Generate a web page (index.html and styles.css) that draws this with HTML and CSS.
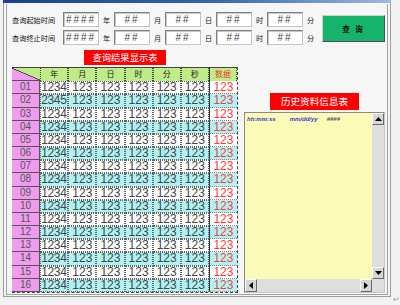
FILE: index.html
```html
<!DOCTYPE html>
<html lang="zh">
<head>
    <meta charset="UTF-8">
    <title>查询</title>
    <link rel="stylesheet" href="styles.css">
</head>
<body>
<div class="window">
    <div class="titlebar"></div>
    <div class="content">
        <div class="query">
            <div class="fields">
                <div class="row">
                    <span class="lbl">查询起始时间</span>
                    <span class="box">####</span><span class="unit">年</span>
                    <span class="box">##</span><span class="unit">月</span>
                    <span class="box">##</span><span class="unit">日</span>
                    <span class="box">##</span><span class="unit">时</span>
                    <span class="box">##</span><span class="unit">分</span>
                </div>
                <div class="row">
                    <span class="lbl">查询终止时间</span>
                    <span class="box">####</span><span class="unit">年</span>
                    <span class="box">##</span><span class="unit">月</span>
                    <span class="box">##</span><span class="unit">日</span>
                    <span class="box">##</span><span class="unit">时</span>
                    <span class="box">##</span><span class="unit">分</span>
                </div>
            </div>
            <button class="btn" type="button">查 询</button>
        </div>

        <div class="main">
            <div class="result">
                <div class="tag">查询结果显示表</div>
                <div class="grid">
                    <div class="tr head">
                        <div class="corner-cell"></div><div class="h">年</div><div class="h">月</div><div class="h">日</div><div class="h">时</div><div class="h">分</div><div class="h">秒</div><div class="h red">数据</div>
                    </div>
                    <div class="tr"><div class="rh">01</div><div class="c y">1234</div><div class="c">123</div><div class="c">123</div><div class="c">123</div><div class="c">123</div><div class="c">123</div><div class="c d">123</div></div>
                    <div class="tr alt"><div class="rh">02</div><div class="c y">2345</div><div class="c">123</div><div class="c">123</div><div class="c">123</div><div class="c">123</div><div class="c">123</div><div class="c d">123</div></div>
                    <div class="tr"><div class="rh">03</div><div class="c y">1234</div><div class="c">123</div><div class="c">123</div><div class="c">123</div><div class="c">123</div><div class="c">123</div><div class="c d">123</div></div>
                    <div class="tr alt"><div class="rh">04</div><div class="c y">1234</div><div class="c">123</div><div class="c">123</div><div class="c">123</div><div class="c">123</div><div class="c">123</div><div class="c d">123</div></div>
                    <div class="tr"><div class="rh">05</div><div class="c y">1234</div><div class="c">123</div><div class="c">123</div><div class="c">123</div><div class="c">123</div><div class="c">123</div><div class="c d">123</div></div>
                    <div class="tr alt"><div class="rh">06</div><div class="c y">1234</div><div class="c">123</div><div class="c">123</div><div class="c">123</div><div class="c">123</div><div class="c">123</div><div class="c d">123</div></div>
                    <div class="tr"><div class="rh">07</div><div class="c y">1234</div><div class="c">123</div><div class="c">123</div><div class="c">123</div><div class="c">123</div><div class="c">123</div><div class="c d">123</div></div>
                    <div class="tr alt"><div class="rh">08</div><div class="c y">1234</div><div class="c">123</div><div class="c">123</div><div class="c">123</div><div class="c">123</div><div class="c">123</div><div class="c d">123</div></div>
                    <div class="tr"><div class="rh">09</div><div class="c y">1234</div><div class="c">123</div><div class="c">123</div><div class="c">123</div><div class="c">123</div><div class="c">123</div><div class="c d">123</div></div>
                    <div class="tr alt"><div class="rh">10</div><div class="c y">1234</div><div class="c">123</div><div class="c">123</div><div class="c">123</div><div class="c">123</div><div class="c">123</div><div class="c d">123</div></div>
                    <div class="tr"><div class="rh">11</div><div class="c y">1234</div><div class="c">123</div><div class="c">123</div><div class="c">123</div><div class="c">123</div><div class="c">123</div><div class="c d">123</div></div>
                    <div class="tr alt"><div class="rh">12</div><div class="c y">1234</div><div class="c">123</div><div class="c">123</div><div class="c">123</div><div class="c">123</div><div class="c">123</div><div class="c d">123</div></div>
                    <div class="tr"><div class="rh">13</div><div class="c y">1234</div><div class="c">123</div><div class="c">123</div><div class="c">123</div><div class="c">123</div><div class="c">123</div><div class="c d">123</div></div>
                    <div class="tr alt"><div class="rh">14</div><div class="c y">1234</div><div class="c">123</div><div class="c">123</div><div class="c">123</div><div class="c">123</div><div class="c">123</div><div class="c d">123</div></div>
                    <div class="tr"><div class="rh">15</div><div class="c y">1234</div><div class="c">123</div><div class="c">123</div><div class="c">123</div><div class="c">123</div><div class="c">123</div><div class="c d">123</div></div>
                    <div class="tr alt"><div class="rh">16</div><div class="c y">1234</div><div class="c">123</div><div class="c">123</div><div class="c">123</div><div class="c">123</div><div class="c">123</div><div class="c d">123</div></div>
                </div>
            </div>

            <div class="history">
                <div class="tag tag-wide">历史资料信息表</div>
                <div class="memo">
                    <div class="memo-text">
                        <span class="f1">hh:mm:ss</span><span class="f2">mm/dd/yy</span><span class="f3">####</span>
                    </div>
                    <div class="vbar">
                        <div class="sbtn"><svg width="7" height="4" viewBox="0 0 7 4"><polygon points="3.5,0 7,4 0,4" fill="#000"/></svg></div>
                        <div class="track"></div>
                        <div class="sbtn"><svg width="7" height="4" viewBox="0 0 7 4"><polygon points="0,0 7,0 3.5,4" fill="#000"/></svg></div>
                    </div>
                    <div class="hbar">
                        <div class="sbtn"><svg width="4" height="7" viewBox="0 0 4 7"><polygon points="4,0 4,7 0,3.5" fill="#000"/></svg></div>
                        <div class="track"></div>
                        <div class="sbtn"><svg width="4" height="7" viewBox="0 0 4 7"><polygon points="0,0 4,3.5 0,7" fill="#000"/></svg></div>
                    </div>
                    <div class="sq"></div>
                </div>
            </div>
        </div>
    </div>
</div>
<span class="para">↵</span>
</body>
</html>
```

FILE: styles.css
```css
body{
    margin: 0;
    height: 305px;
    display: flex;
    background: #f2f2f2;
    font-family: "Liberation Sans", "Noto Sans CJK SC", sans-serif;
}
.window{
    box-sizing: border-box;
    width: 389px;
    height: 297px;
    margin-left: 3px;
    border: 1px solid #9c9c9c;
    border-top: none;
    padding: 0 2px 1px 2px;
    background: #f6f6f6;
    display: flex;
    flex-direction: column;
}
.titlebar{
    height: 3px;
    margin: 0 -3px 1px -3px;
    background: linear-gradient(to right, #1b3f8c, #3566b0 55%, #9fb8e0);
}
.content{
    flex: 1;
    border: 1px solid #a0a0a0;
    border-top: none;
    padding: 8px 0 0 5px;
    background: #f6f6f6;
}

/* query fields */
.query{
    display: flex;
    align-items: center;
}
.fields{
    display: flex;
    flex-direction: column;
    gap: 3px;
}
.row{
    display: flex;
    align-items: center;
    height: 15px;
}
.lbl{
    width: 51px;
    font-family: "Noto Sans CJK SC", sans-serif;
    font-size: 7.2px;
    color: #111;
}
.box{
    box-sizing: border-box;
    width: 36px;
    height: 15px;
    background: #fff;
    border: 1px solid;
    border-color: #808080 #c4c4c4 #c4c4c4 #808080;
    box-shadow: inset 1px 1px 0 #c8c8c8;
    font-size: 10px;
    letter-spacing: 2px;
    line-height: 13px;
    text-align: center;
    color: #444;
}
.unit{
    width: 15px;
    text-align: center;
    font-family: "Noto Sans CJK SC", sans-serif;
    font-size: 7.2px;
    color: #222;
}
.btn{
    width: 63px;
    height: 27px;
    margin-left: 4px;
    padding: 0;
    background: #16b46b;
    border: 1px solid;
    border-color: #d0d0d0 #505050 #505050 #d0d0d0;
    font-family: "Noto Sans CJK SC", sans-serif;
    font-size: 7.5px;
    font-weight: bold;
    letter-spacing: 2px;
    color: #111;
}

/* main area */
.main{
    display: flex;
    align-items: flex-end;
    margin-top: 5px;
}
.result{
    width: 226px;
    display: flex;
    flex-direction: column;
}
.tag{
    align-self: center;
    width: 82px;
    height: 15px;
    line-height: 15px;
    background: #ff0000;
    color: #fff;
    text-align: center;
    font-family: "Noto Sans CJK SC", sans-serif;
    font-size: 9.3px;
}
.result .tag{
    margin-bottom: 2px;
}
.grid{
    height: 226px;
    display: flex;
    flex-direction: column;
    border-top: 1px solid #444;
    border-right: 1px dashed #444;
    border-bottom: 1px dashed #444;
    box-sizing: border-box;
}
.tr{
    flex: 1;
    display: grid;
    grid-template-columns: repeat(8, 1fr);
    min-height: 0;
}
.tr > div{
    box-sizing: border-box;
    white-space: nowrap;
    text-align: center;
}
.head .h{
    background: #c0ec88;
    border-left: 1px dotted #444;
    border-right: 1px dotted #444;
    font-family: "Noto Sans CJK SC", sans-serif;
    font-size: 8px;
    line-height: 12px;
    color: #222;
}
.head .red{
    color: #e83a3a;
    border-left: 1px solid #333;
}
.corner-cell{
    background: linear-gradient(to bottom left, #c0ec88 48%, #444 49%, #444 52%, #ef9cef 53%);
    border-bottom: 1px solid #555;
}
.rh{
    background: #ef9cef;
    border-bottom: 1px solid #555;
    border-right: 1px solid #555;
    font-size: 10px;
    line-height: 12px;
    color: #555;
}
.c{
    background: #fff;
    border: 1px dotted #666;
    font-size: 12px;
    line-height: 11px;
    color: #444;
}
.c.y{
    text-align: left;
    letter-spacing: -0.3px;
}
.c.d{
    color: #ff3c3c;
    border: none;
    border-left: 1px solid #333;
    border-bottom: 1px dotted #888;
    line-height: 12px;
}
.alt .c{
    background: #b0f2f2;
}

/* history panel */
.history{
    margin-left: 6px;
    display: flex;
    flex-direction: column;
}
.tag-wide{
    width: 89px;
    height: 17px;
    line-height: 17px;
    margin-bottom: 2px;
    font-size: 9.6px;
}
.memo{
    box-sizing: border-box;
    width: 141px;
    height: 181px;
    display: grid;
    grid-template-columns: 1fr 12px;
    grid-template-rows: 1fr 13px;
    border: 1px solid;
    border-color: #8a8a8a #c8c8c8 #c8c8c8 #8a8a8a;
}
.memo-text{
    background: #fbfab6;
    padding: 2px 2px;
    font-size: 6px;
    font-weight: bold;
    font-style: italic;
    color: #3a3acb;
    line-height: 9px;
}
.f2{
    margin-left: 14px;
}
.f3{
    margin-left: 9px;
    color: #555;
}
.vbar, .hbar{
    display: flex;
    background: #dedede;
}
.vbar{
    flex-direction: column;
}
.track{
    flex: 1;
}
.sbtn{
    box-sizing: border-box;
    width: 12px;
    height: 12px;
    background: #d6d6d6;
    border: 1px solid;
    border-color: #fafafa #6a6a6a #6a6a6a #fafafa;
    display: flex;
    align-items: center;
    justify-content: center;
}
.hbar .sbtn{
    height: 13px;
}
.sq{
    background: #dedede;
}
.para{
    align-self: flex-end;
    margin: 0 0 1px 2px;
    font-size: 8px;
    line-height: 8px;
    color: #999;
}
```
